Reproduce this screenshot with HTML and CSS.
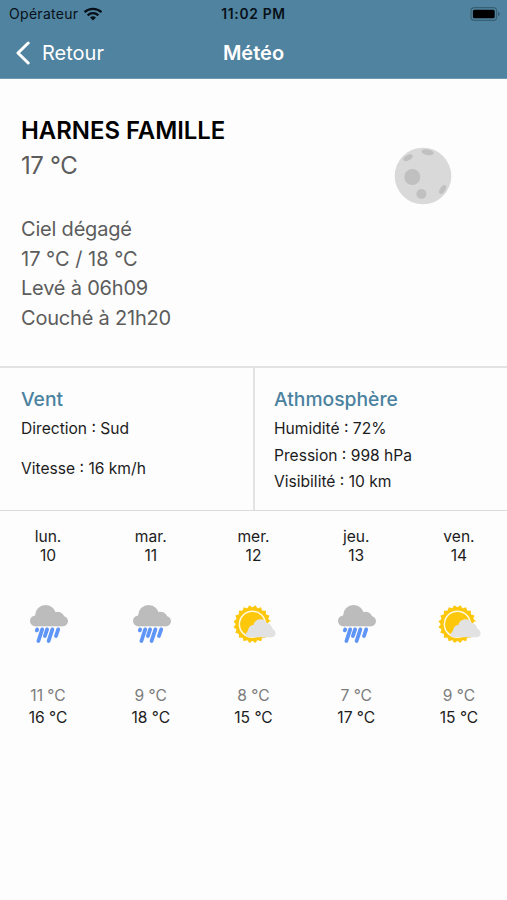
FILE: index.html
```html
<!DOCTYPE html>
<html lang="fr">
<head>
    <meta charset="UTF-8">
    <meta name="viewport" content="width=device-width, initial-scale=1.0">
    <title>Météo</title>
    <link rel="stylesheet" href="styles.css">
</head>
<body>
    <!-- shared weather icons -->
    <svg class="defs" width="0" height="0">
        <symbol id="rain" viewBox="0 0 60 50">
            <g fill="#bcbcbc">
                <circle cx="27.6" cy="15.4" r="10.5"/>
                <circle cx="39.6" cy="19" r="7.2"/>
                <circle cx="17.4" cy="20.9" r="5.4"/>
                <circle cx="44.8" cy="21.1" r="5.2"/>
                <rect x="17.4" y="15.5" width="27.4" height="10.8"/>
            </g>
            <g stroke="#5f95f6" stroke-width="3.8" stroke-linecap="round">
                <path d="M19.2 29.4L18.8 30.4M24.2 29.4L20.4 41M29.1 29.4L26.9 36M34.4 29.4L30.6 41M40.2 29.4L38 36"/>
            </g>
        </symbol>
        <symbol id="sun" viewBox="0 0 60 50">
            <g fill="#fdc70c" transform="translate(28.4 24.2)">
                <rect x="-13.5" y="-13.5" width="27" height="27"/>
                <rect x="-13.5" y="-13.5" width="27" height="27" transform="rotate(18)"/>
                <rect x="-13.5" y="-13.5" width="27" height="27" transform="rotate(36)"/>
                <rect x="-13.5" y="-13.5" width="27" height="27" transform="rotate(54)"/>
                <rect x="-13.5" y="-13.5" width="27" height="27" transform="rotate(72)"/>
                <circle r="13" stroke="#fff8df" stroke-width="1.5"/>
            </g>
            <path d="M41 37.2H52V26L46 21L43 24Z" fill="#fdfdfd"/>
            <path d="M24.4 37.2C21.6 37.2 20.9 34.4 22.6 32.4C23.6 31.2 24 30.8 24.3 29.2C24.9 26.4 27.4 25.2 29.4 25C30.4 21.5 33 19.3 36.5 19.3C39.9 19.3 42 21.4 43.2 23.2C45.8 23.2 47.5 25.2 48.2 28.2C50.4 29.6 51.6 31.6 51.6 33.6C51.6 35.8 50 37.2 47.8 37.2Z" fill="#e2e2e3"/>
        </symbol>
    </svg>

    <header>
        <div class="status">
            <div class="carrier">
                <span>Opérateur</span>
                <svg width="20" height="14" viewBox="0 0 20 14" fill="none" stroke="#071018" stroke-width="2.3">
                    <path d="M1.5 5.2C6.3.7 13.7.7 18.5 5.2"/>
                    <path d="M4.6 8.4C7.8 5.5 12.2 5.5 15.4 8.4"/>
                    <path d="M7 10.4C8.8 8.9 11.2 8.9 13 10.4L10 13.4Z" fill="#071018" stroke="none"/>
                </svg>
            </div>
            <div class="time">11:02 PM</div>
            <svg class="battery" width="31" height="14" viewBox="0 0 31 14">
                <rect x="1" y="0.7" width="25.6" height="12.6" rx="3.4" fill="none" stroke="#386075" stroke-width="1.2"/>
                <rect x="2.9" y="2.7" width="21.8" height="8.6" rx="1.6" fill="#000"/>
                <path d="M28 4.8C30.6 5.6 30.6 8.4 28 9.2Z" fill="#386075"/>
            </svg>
        </div>
        <nav>
            <a class="back">
                <svg width="16" height="24" viewBox="0 0 16 24" fill="none" stroke="#fff" stroke-width="3" stroke-linecap="round" stroke-linejoin="round">
                    <path d="M13.2 2L3 12L13.2 22"/>
                </svg>
                <span>Retour</span>
            </a>
            <h1>Météo</h1>
            <div></div>
        </nav>
    </header>

    <section class="current">
        <div>
            <h2>HARNES FAMILLE</h2>
            <p class="temp">17 °C</p>
            <div class="details">
                <p class="sky">Ciel dégagé</p>
                <p class="range">17 °C / 18 °C</p>
                <p class="rise">Levé à 06h09</p>
                <p class="set">Couché à 21h20</p>
            </div>
        </div>
        <svg class="moon" width="58" height="58" viewBox="0 0 58 58">
            <clipPath id="disc"><circle cx="29" cy="29" r="28.3"/></clipPath>
            <circle cx="29" cy="29" r="28.3" fill="#d9d9d9"/>
            <g fill="#c0c0c0" clip-path="url(#disc)">
                <circle cx="18.3" cy="30" r="8"/>
                <circle cx="27.4" cy="47" r="5"/>
                <ellipse cx="33.6" cy="5.2" rx="6.2" ry="2.8" transform="rotate(10 33.6 5.2)"/>
                <ellipse cx="14" cy="10.8" rx="5" ry="2.6" transform="rotate(-28 14 10.8)"/>
                <ellipse cx="48.6" cy="42.6" rx="5" ry="2.6" transform="rotate(-58 48.6 42.6)"/>
            </g>
        </svg>
    </section>

    <section class="infos">
        <div class="info wind">
            <h3>Vent</h3>
            <p>Direction : Sud</p>
            <p>Vitesse : 16 km/h</p>
        </div>
        <div class="info air">
            <h3>Athmosphère</h3>
            <p>Humidité : 72%</p>
            <p>Pression : 998 hPa</p>
            <p>Visibilité : 10 km</p>
        </div>
    </section>

    <section class="forecast">
        <div class="day">
            <p>lun.<br>10</p>
            <svg width="60" height="50"><use href="#rain"/></svg>
            <p class="min">11 °C</p>
            <p class="max">16 °C</p>
        </div>
        <div class="day">
            <p>mar.<br>11</p>
            <svg width="60" height="50"><use href="#rain"/></svg>
            <p class="min">9 °C</p>
            <p class="max">18 °C</p>
        </div>
        <div class="day">
            <p>mer.<br>12</p>
            <svg width="60" height="50"><use href="#sun"/></svg>
            <p class="min">8 °C</p>
            <p class="max">15 °C</p>
        </div>
        <div class="day">
            <p>jeu.<br>13</p>
            <svg width="60" height="50"><use href="#rain"/></svg>
            <p class="min">7 °C</p>
            <p class="max">17 °C</p>
        </div>
        <div class="day">
            <p>ven.<br>14</p>
            <svg width="60" height="50"><use href="#sun"/></svg>
            <p class="min">9 °C</p>
            <p class="max">15 °C</p>
        </div>
    </section>
</body>
</html>
```
FILE: styles.css
```css
* {
    box-sizing: border-box;
}

body {
    margin: 0;
    height: 900px;
    overflow: hidden;
    font-family: Inter, "Liberation Sans", sans-serif;
    background: #fdfdfd;
    color: #1c1c1c;
    white-space: nowrap;
}

h1, h2, h3, p {
    margin: 0;
}

svg {
    display: block;
}

.defs {
    position: absolute;
}

header {
    height: 79px;
    background: #50839f;
    border-bottom: 1px solid #6f9ab1;
}

.status, nav {
    display: grid;
    grid-template-columns: 1fr auto 1fr;
    align-items: center;
}

.status {
    height: 27px;
    padding: 0 6px 0 9px;
    color: #071018;
    font-size: 14px;
}

.carrier {
    display: flex;
    align-items: center;
    gap: 5px;
    letter-spacing: 0.3px;
}

.time {
    margin-right: 3px;
    font-size: 13.8px;
    font-weight: 600;
    letter-spacing: 0.7px;
}

.battery {
    justify-self: end;
}

nav {
    height: 51px;
    padding: 0 15px;
    color: #fff;
}

.back {
    display: flex;
    align-items: center;
    gap: 11px;
    font-size: 20px;
}

h1 {
    font-size: 20px;
    font-weight: 600;
}

.current {
    display: flex;
    justify-content: space-between;
    height: 287px;
    padding: 35px 55px 0 21px;
    color: #5c5c5c;
}

h2 {
    font-size: 23.9px;
    line-height: 34px;
    font-weight: 600;
    color: #000;
}

.temp {
    font-size: 24px;
    line-height: 35px;
    letter-spacing: -0.4px;
}

.details {
    margin-top: 32px;
    font-size: 20px;
    line-height: 29.7px;
    letter-spacing: -0.2px;
}

.range {
    letter-spacing: 0;
}

.moon {
    margin-top: 33px;
}

.infos {
    display: grid;
    grid-template-columns: 255px 1fr;
    height: 145px;
    border-top: 2px solid #e3e3e3;
    border-bottom: 1px solid #dcdcdc;
}

.info {
    padding: 17px 0 0 21px;
    font-size: 15.6px;
    line-height: 26.6px;
}

.wind {
    border-right: 2px solid #e3e3e3;
}

.wind p + p {
    margin-top: 13.4px;
}

.air {
    padding-left: 19px;
}

h3 {
    margin-bottom: 3px;
    font-size: 19.3px;
    line-height: 28px;
    font-weight: 500;
    color: #4a829f;
}

.forecast {
    display: flex;
    justify-content: space-between;
    padding: 17px 18px 0;
}

.day {
    width: 60px;
    text-align: center;
    font-size: 15.6px;
    line-height: 18.5px;
}

.day svg {
    margin: 35px 0 37px;
}

.min, .max {
    line-height: 21.5px;
}

.min {
    margin-top: -2px;
    color: #7c7c7c;
}
```
